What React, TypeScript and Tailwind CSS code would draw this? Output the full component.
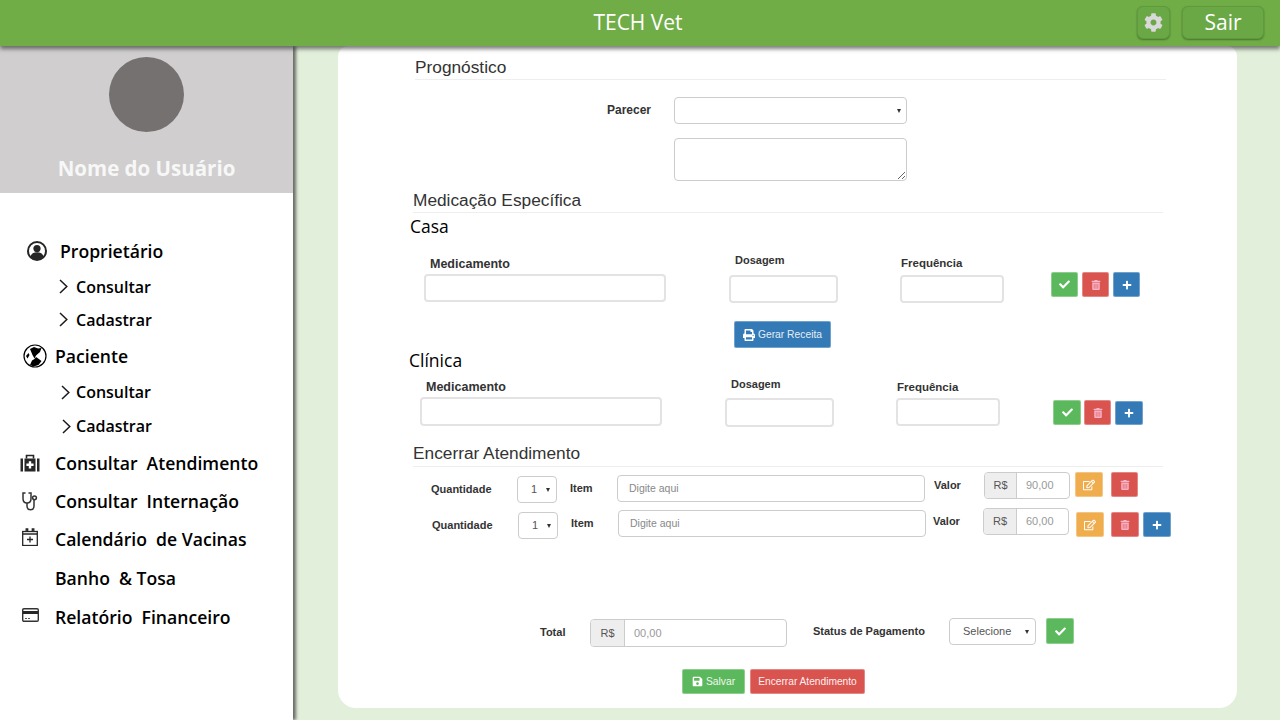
import React from "react";
import { FaCheck, FaCog, FaPlus, FaPrint, FaRegEdit, FaSave, FaTrashAlt } from "react-icons/fa";

// Sidebar icons
const UserIcon = () => (
  <svg width="20" height="20" viewBox="0 0 20 20" aria-hidden="true">
    <circle cx="10" cy="10" r="9" fill="#fff" stroke="#262626" strokeWidth="2" />
    <circle cx="10" cy="7.6" r="3.6" fill="#262626" />
    <path d="M3.4 15.5c1-3 3.6-4.2 6.6-4.2s5.6 1.2 6.6 4.2A9 9 0 0 1 10 19a9 9 0 0 1-6.6-3.5z" fill="#262626" />
  </svg>
);

const PawIcon = () => (
  <svg width="24" height="24" viewBox="0 0 24 24" aria-hidden="true">
    <circle cx="12" cy="12" r="11" fill="#fff" stroke="#000" strokeWidth="1.2" />
    <path d="M7 5 11 3l4 1.5 3.500-.5-1.500 4-4 3.500-1.500 3-2-3.500z" fill="#000" />
    <path d="M7 21 9 16.500l2.500-1.500 1.500-2 1.500 1 4 3-3 4-5 1.500z" fill="#000" />
    <path d="M3 12l2.500-3 1 2-2 3.500z" fill="#000" />
  </svg>
);

const KitIcon = () => (
  <svg width="20" height="18" viewBox="0 0 20 18" aria-hidden="true">
    <path d="M6.5 4.5V1.5h7v3" fill="none" stroke="#262626" strokeWidth="1.6" />
    <rect x="0.5" y="4.5" width="2.5" height="13" fill="#262626" />
    <rect x="17" y="4.5" width="2.5" height="13" fill="#262626" />
    <rect x="4.5" y="4.5" width="11" height="13" fill="#262626" />
    <path d="M8.8 7.2h2.4v2.4h2.4V12h-2.4v2.4H8.8V12H6.4V9.6h2.4z" fill="#fff" />
  </svg>
);

const ScopeIcon = () => (
  <svg width="16" height="19" viewBox="0 0 16 19" fill="none" stroke="#333" strokeWidth="1.5" aria-hidden="true">
    <path d="M3 1H1v5.5c0 2.8 1.7 4.5 4 4.5s4-1.700 4-4.500V1H7" strokeLinecap="round" />
    <path d="M5 11v3c0 2.200 1.500 3.800 3.500 3.800s3.500-1.600 3.500-3.800V8" />
    <circle cx="12.5" cy="5.8" r="1.9" />
  </svg>
);

const CalendarIcon = () => (
  <svg width="16" height="18" viewBox="0 0 16 18" fill="none" stroke="#262626" strokeWidth="1.3" aria-hidden="true">
    <rect x="0.7" y="3.5" width="14.6" height="14" />
    <path d="M0.7 6h14.6" strokeWidth="1.5" />
    <path d="M4.2 3.5V1h1.5v2.5M10.3 3.5V1h1.5v2.5" />
    <path d="M8 8.5v6M5 11.5h6" />
  </svg>
);

const CardIcon = () => (
  <svg width="17" height="14" viewBox="0 0 17 14" aria-hidden="true">
    <rect x="0.7" y="0.7" width="15.6" height="12.6" rx="1.2" fill="#fff" stroke="#333" strokeWidth="1.4" />
    <rect x="1" y="3" width="15" height="3" fill="#262626" />
    <path d="M3 10.5h2M6 10.5h2" stroke="#555" strokeWidth="1.2" />
  </svg>
);

const Chevron = ({ className }: { className: string }) => (
  <svg width="9" height="15" viewBox="0 0 9 15" fill="none" stroke="#1a1a1a" strokeWidth="1.5" className={className} aria-hidden="true">
    <path d="M1 1l6.8 6.5L1 14" />
  </svg>
);

const Caret = ({ className }: { className: string }) => (
  <span className={`w-0 h-0 border-x-[2.5px] border-x-transparent border-t-[4px] border-t-[#333] ${className}`} />
);

// Sidebar sub entry: chevron + label
const SubItem = ({ label, rowClass, chevronClass }: { label: string; rowClass: string; chevronClass: string }) => (
  <div className={`flex items-center h-[30px] ${rowClass}`}>
    <Chevron className={chevronClass} />
    <span className="text-[16px] font-semibold text-black">{label}</span>
  </div>
);

const NavItem = ({ icon, label, rowClass, iconClass = "" }: { icon?: React.ReactNode; label: string; rowClass: string; iconClass?: string }) => (
  <div className={`flex items-center h-[30px] ${rowClass}`}>
    <span className={`w-[55px] flex justify-center pl-[5px] shrink-0 ${iconClass}`}>{icon}</span>
    <span className="text-[17.6px] font-semibold text-black whitespace-pre">{label}</span>
  </div>
);

const Sidebar = () => (
  <aside className="relative z-10 w-[293px] shrink-0 bg-white shadow-[3px_0_3px_rgba(40,40,40,0.65)] font-['Open_Sans',sans-serif]">
    <div className="h-[147px] bg-[#d0cece] flex flex-col items-center">
      <div className="mt-[11px] w-[75px] h-[75px] rounded-full bg-[#767171]" />
      <div className="mt-[21px] text-[20.5px] leading-[30px] font-bold text-[#f7f7f7]">Nome do Usuário</div>
    </div>
    <nav className="flex flex-col">
      <div className="flex items-center h-[30px] mt-[43px]">
        <span className="ml-[27px] w-[33px] shrink-0">
          <UserIcon />
        </span>
        <span className="text-[17.6px] font-semibold text-black">Proprietário</span>
      </div>
      <SubItem label="Consultar" rowClass="mt-[6px] pl-[59px]" chevronClass="mr-[8px] -mt-[2px]" />
      <SubItem label="Cadastrar" rowClass="mt-[3px] pl-[59px]" chevronClass="mr-[8px] -mt-[1px]" />
      <div className="flex items-center h-[30px] mt-[6px]">
        <span className="ml-[23px] w-[32px] shrink-0">
          <PawIcon />
        </span>
        <span className="text-[17.6px] font-semibold text-black">Paciente</span>
      </div>
      <SubItem label="Consultar" rowClass="mt-[6px] pl-[61px]" chevronClass="mr-[6px]" />
      <SubItem label="Cadastrar" rowClass="mt-[4px] pl-[62px]" chevronClass="mr-[5px]" />
      <NavItem icon={<KitIcon />} label="Consultar  Atendimento" rowClass="mt-[7px]" />
      <NavItem icon={<ScopeIcon />} label="Consultar  Internação" rowClass="mt-[8px]" />
      <NavItem icon={<CalendarIcon />} label="Calendário  de Vacinas" rowClass="mt-[8px]" iconClass="-mt-[4px]" />
      <NavItem label="Banho  & Tosa" rowClass="mt-[9px]" />
      <NavItem icon={<CardIcon />} label="Relatório  Financeiro" rowClass="mt-[9px]" iconClass="-mt-[4px]" />
    </nav>
  </aside>
);

const inputSoft = "block w-full rounded-[4px] border-2 border-[#e3e3e3] bg-white";
const labelBold = "block leading-[14px] font-bold text-[#333] whitespace-nowrap";
const labelSmall = "block text-[11px] leading-[14px] font-bold text-[#333] whitespace-nowrap";
const btnBase = "flex items-center justify-center rounded-[2px] border border-white/30 whitespace-nowrap shrink-0";

const Heading = ({ children, className }: { children: string; className: string }) => (
  <div className={`border-b border-[#eeeeee] text-[17.3px] leading-[20px] text-[#333] ${className}`}>{children}</div>
);

const FakeSelect = ({ value, className }: { value: string; className: string }) => (
  <div className={`relative flex items-center rounded-[4px] border border-[#cccccc] bg-white text-[11px] text-[#555] shrink-0 ${className}`}>
    <span className="ml-[13px]">{value}</span>
    <Caret className="ml-auto mr-[6px]" />
  </div>
);

const MoneyGroup = ({ value, className, addonClass }: { value: string; className: string; addonClass: string }) => (
  <div className={`flex rounded-[4px] border border-[#cccccc] bg-white text-[11px] shrink-0 overflow-hidden ${className}`}>
    <span className={`flex items-center justify-center bg-[#eeeeee] border-r border-[#cccccc] text-[#555] ${addonClass}`}>R$</span>
    <span className="flex items-center pl-[9px] text-[#999]">{value}</span>
  </div>
);

const Trash = () => <FaTrashAlt size={10} className="text-[#f8b4c8]" />;
const Edit = () => <FaRegEdit size={12} className="text-white" />;
const Check = () => <FaCheck size={11} className="text-white" />;
const Plus = () => <FaPlus size={10} className="text-white" />;

const Form = () => (
  <main className="flex-1 bg-[#e2efda] pl-[45px]">
    <div className="w-[899px] h-[662px] bg-white rounded-b-[18px] rounded-t-[10px] pl-[72px] font-['Liberation_Sans',Arial,sans-serif] flex flex-col items-start">
      <Heading className="mt-[11px] ml-[5px] w-[751px] h-[23px]">Prognóstico</Heading>

      <div className="flex mt-[17px] ml-[197px] h-[27px]">
        <span className="w-[43px] text-[12px] leading-[27px] font-bold text-[#333] whitespace-nowrap">Parecer</span>
        <div className="ml-[24px] w-[233px] h-[27px] rounded-[4px] border border-[#cccccc] bg-white flex items-center">
          <Caret className="ml-auto mr-[5px]" />
        </div>
      </div>
      <textarea aria-label="Parecer" className="block mt-[14px] ml-[264px] w-[233px] h-[43px] rounded-[4px] border border-[#cccccc] bg-white outline-none" />

      <Heading className="mt-[9px] ml-[3px] w-[750px] h-[23px]">Medicação Específica</Heading>
      <div className="mt-[4px] text-[17.5px] leading-[19px] text-black font-['Open_Sans',sans-serif]">Casa</div>

      <div className="flex items-start mt-[17px]">
        <div className="ml-[14px] mt-[4px] w-[242px]">
          <span className={`${labelBold} text-[12.5px] pl-[6px]`}>Medicamento</span>
          <div className={`${inputSoft} mt-[3px] h-[28px]`} />
        </div>
        <div className="ml-[63px] w-[109px]">
          <span className={`${labelSmall} pl-[6px]`}>Dosagem</span>
          <div className={`${inputSoft} mt-[8px] h-[28px]`} />
        </div>
        <div className="ml-[62px] mt-[3px] w-[104px]">
          <span className={`${labelBold} text-[11.5px] pl-[1px]`}>Frequência</span>
          <div className={`${inputSoft} mt-[5px] h-[28px]`} />
        </div>
        <div className="ml-[47px] mt-[19px] flex gap-[4px]">
          <span className={`${btnBase} w-[27px] h-[25px] bg-[#5cb85c]`}><Check /></span>
          <span className={`${btnBase} w-[27px] h-[25px] bg-[#d9534f]`}><Trash /></span>
          <span className={`${btnBase} w-[27px] h-[25px] bg-[#337ab7]`}><Plus /></span>
        </div>
      </div>

      <button className={`${btnBase} mt-[18px] ml-[324px] w-[97px] h-[27px] bg-[#337ab7] gap-[3px] text-[10.3px] text-[#e4edf5]`}>
        <FaPrint size={12} className="text-white" /> Gerar Receita
      </button>

      <div className="mt-[3px] -ml-[1px] text-[17.5px] leading-[19px] text-black font-['Open_Sans',sans-serif]">Clínica</div>

      <div className="flex items-start mt-[7px]">
        <div className="ml-[10px] mt-[3px] w-[242px]">
          <span className={`${labelBold} text-[12.5px] pl-[6px]`}>Medicamento</span>
          <div className={`${inputSoft} mt-[3px] h-[29px]`} />
        </div>
        <div className="ml-[63px] w-[109px]">
          <span className={`${labelSmall} pl-[6px]`}>Dosagem</span>
          <div className={`${inputSoft} mt-[7px] h-[29px]`} />
        </div>
        <div className="ml-[62px] mt-[3px] w-[104px]">
          <span className={`${labelBold} text-[11.5px] pl-[1px]`}>Frequência</span>
          <div className={`${inputSoft} mt-[4px] h-[28px]`} />
        </div>
        <div className="ml-[53px] mt-[23px] flex gap-[3px]">
          <span className={`${btnBase} w-[28px] h-[25px] bg-[#5cb85c]`}><Check /></span>
          <span className={`${btnBase} w-[27px] h-[25px] bg-[#d9534f]`}><Trash /></span>
          <span className={`${btnBase} mt-[1px] ml-[1px] w-[28px] h-[24px] bg-[#337ab7]`}><Plus /></span>
        </div>
      </div>

      <Heading className="mt-[16px] ml-[3px] w-[750px] h-[24px]">Encerrar Atendimento</Heading>

      <div className="flex items-start mt-[5px] h-[31px]">
        <span className={`${labelSmall} ml-[21px] mt-[10px] w-[86px]`}>Quantidade</span>
        <FakeSelect value="1" className="mt-[4px] w-[40px] h-[27px]" />
        <span className={`${labelSmall} ml-[13px] mt-[9px] w-[47px]`}>Item</span>
        <div className="mt-[3px] w-[308px] h-[27px] pt-[1px] rounded-[4px] border border-[#cccccc] bg-white flex items-center pl-[11px] text-[10.5px] text-[#888]">Digite aqui</div>
        <span className={`${labelSmall} ml-[9px] mt-[6px] w-[50px]`}>Valor</span>
        <MoneyGroup value="90,00" className="w-[86px] h-[27px]" addonClass="w-[32px]" />
        <span className={`${btnBase} ml-[5px] w-[28px] h-[25px] bg-[#f0ad4e]`}><Edit /></span>
        <span className={`${btnBase} ml-[8px] w-[27px] h-[25px] bg-[#d9534f]`}><Trash /></span>
      </div>

      <div className="flex items-start mt-[5px] h-[31px]">
        <span className={`${labelSmall} ml-[22px] mt-[10px] w-[86px]`}>Quantidade</span>
        <FakeSelect value="1" className="mt-[4px] w-[40px] h-[27px]" />
        <span className={`${labelSmall} ml-[13px] mt-[8px] w-[47px]`}>Item</span>
        <div className="mt-[2px] w-[308px] h-[27px] pt-[1px] rounded-[4px] border border-[#cccccc] bg-white flex items-center pl-[11px] text-[10.5px] text-[#888]">Digite aqui</div>
        <span className={`${labelSmall} ml-[7px] mt-[6px] w-[50px]`}>Valor</span>
        <MoneyGroup value="60,00" className="w-[86px] h-[27px]" addonClass="w-[33px]" />
        <span className={`${btnBase} ml-[7px] mt-[4px] w-[28px] h-[25px] bg-[#f0ad4e]`}><Edit /></span>
        <span className={`${btnBase} ml-[7px] mt-[4px] w-[28px] h-[25px] bg-[#d9534f]`}><Trash /></span>
        <span className={`${btnBase} ml-[4px] mt-[4px] w-[28px] h-[25px] bg-[#337ab7]`}><Plus /></span>
      </div>

      <div className="flex items-start mt-[79px] h-[29px]">
        <span className={`${labelSmall} ml-[130px] mt-[7px] w-[50px]`}>Total</span>
        <MoneyGroup value="00,00" className="mt-[1px] w-[197px] h-[28px]" addonClass="w-[34px]" />
        <span className={`${labelSmall} ml-[26px] mt-[6px] w-[136px]`}>Status de Pagamento</span>
        <FakeSelect value="Selecione" className="w-[87px] h-[27px]" />
        <span className={`${btnBase} ml-[10px] w-[28px] h-[26px] bg-[#5cb85c]`}><Check /></span>
      </div>

      <div className="flex mt-[22px] ml-[272px]">
        <button className={`${btnBase} w-[63px] h-[25px] bg-[#5cb85c] gap-[3px] text-[10.3px] text-[#eef7ee]`}>
          <FaSave size={11} className="text-white" /> Salvar
        </button>
        <button className={`${btnBase} ml-[5px] w-[115px] h-[25px] bg-[#d9534f] text-[10.2px] text-[#fdf0ef]`}>
          Encerrar Atendimento
        </button>
      </div>
    </div>
  </main>
);

export default function App() {
  return (
    <div className="w-[1280px] h-[720px] overflow-hidden flex flex-col bg-[#e2efda]">
      <header className="relative z-20 h-[46px] shrink-0 bg-[#70ad47] shadow-[0_3px_4px_rgba(40,40,40,0.6)] grid grid-cols-[1fr_auto_1fr] items-center font-['Open_Sans',sans-serif]">
        <div />
        <div className="text-[21px] text-white -ml-[4px]">TECH Vet</div>
        <div className="flex justify-end pr-[16px] gap-[12px] -mt-[1px]">
          <div className="w-[33px] h-[33px] rounded-[6px] border border-[#5f9a3c] bg-[#6aa846] shadow-[0_1px_2px_rgba(0,0,0,0.35)] flex items-center justify-center">
            <FaCog size={19} className="text-[#d9d9d9]" />
          </div>
          <div className="w-[82px] h-[33px] rounded-[6px] border border-[#5f9a3c] bg-[#6aa846] shadow-[0_1px_2px_rgba(0,0,0,0.35)] flex items-center justify-center text-[21px] text-white">
            Sair
          </div>
        </div>
      </header>
      <div className="flex flex-1 min-h-0">
        <Sidebar />
        <Form />
      </div>
    </div>
  );
}
